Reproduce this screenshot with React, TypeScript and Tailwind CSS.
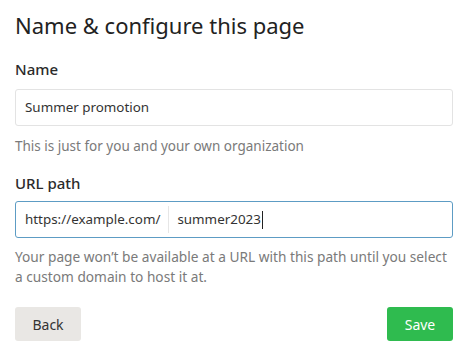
import React from "react";

export default function App() {
  return (
    <div
      className="w-[461px] h-[351px] bg-white pl-[15px] pr-[8px] pt-[10px] flex flex-col text-[#262626]"
      style={{ fontFamily: '"Noto Sans", "Open Sans", sans-serif' }}
    >
      <h1 className="text-[22px] leading-[30px] font-normal text-[#222]">Name &amp; configure this page</h1>

      <div className="mt-[19px] text-[15px] leading-[20px] font-medium text-[#2b2b2b]">Name</div>
      <div className="mt-[10px] h-[37px] border border-[#e3e3e3] rounded-[3px] flex items-center px-[9px] text-[13.4px] text-[#333]">
        Summer promotion
      </div>
      <div className="mt-[10px] text-[13.5px] leading-[20px] text-[#7a7a7a]">
        This is just for you and your own organization
      </div>

      <div className="mt-[17px] text-[15px] leading-[20px] font-medium text-[#2b2b2b]">URL path</div>
      <div className="mt-[8px] h-[37px] border border-[#5d9cc4] rounded-[3px] flex items-center px-[9px] text-[13.4px] text-[#333]">
        <span>https://example.com/</span>
        <span className="mx-[8px] h-[27px] w-px bg-[#e6e6e6]" />
        <span>summer2023</span>
        <span className="ml-px h-[18px] w-px bg-[#222]" />
      </div>
      <div className="mt-[9px] text-[13.7px] leading-[20px] text-[#7a7a7a]">
        Your page won’t be available at a URL with this path until you select a custom domain to host it at.
      </div>

      <div className="mt-[20px] flex justify-between">
        <button className="h-[34px] w-[66px] rounded-[3px] bg-[#e9e7e4] text-[14px] text-[#333]">Back</button>
        <button className="h-[34px] w-[66px] rounded-[3px] bg-[#2fbb4f] text-[14px] text-white">Save</button>
      </div>
    </div>
  );
}
